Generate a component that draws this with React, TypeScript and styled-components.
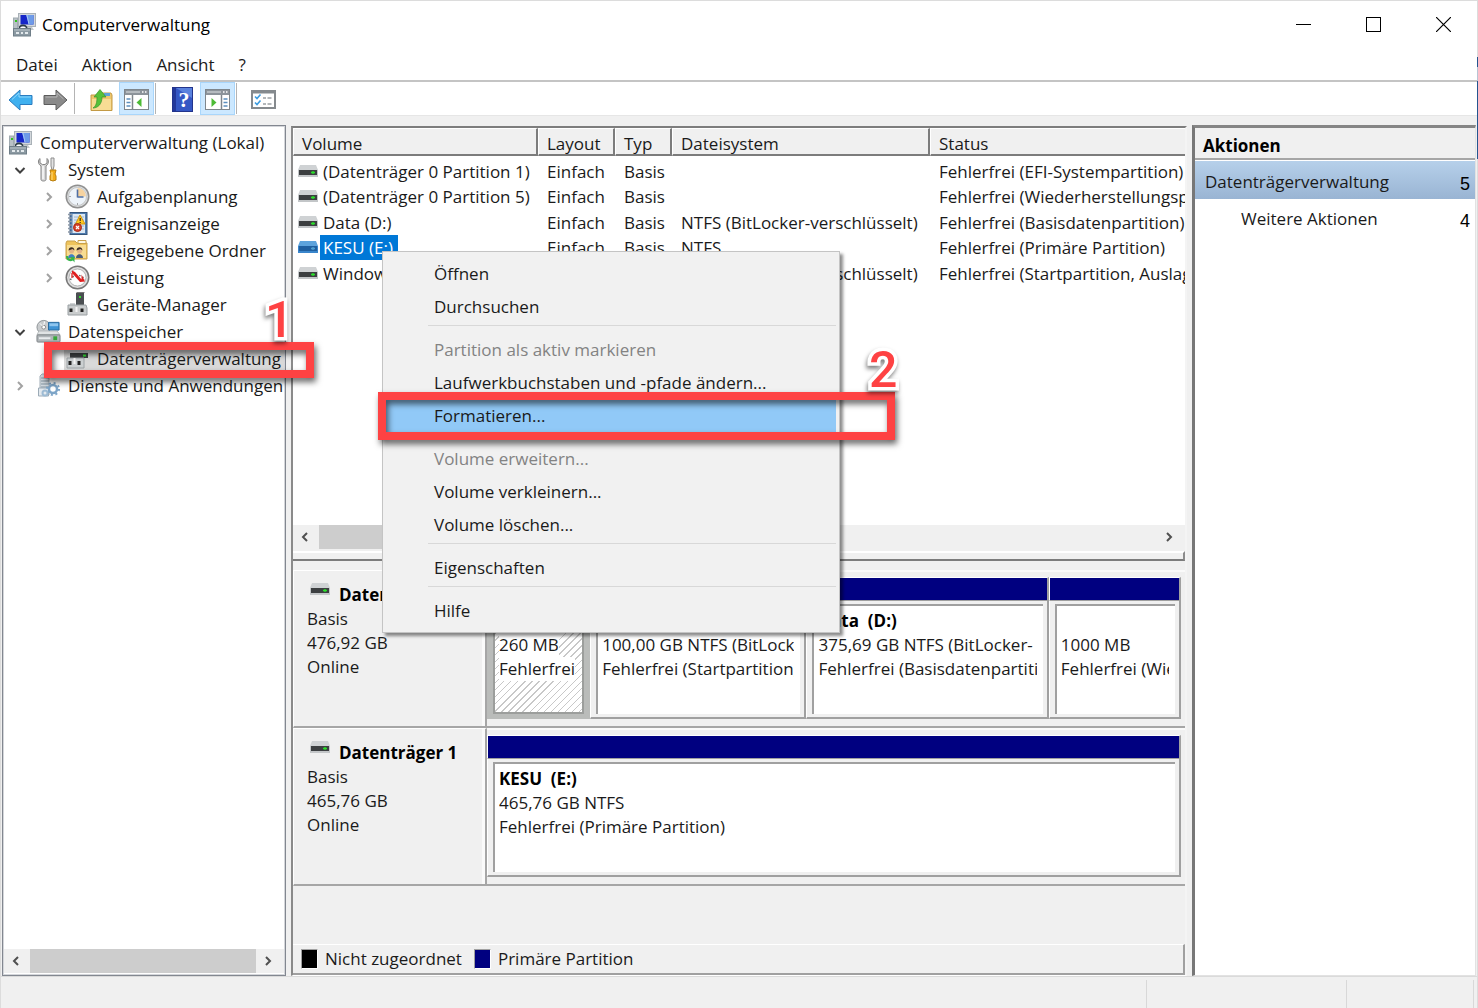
import React from "react";
import styled, { createGlobalStyle, css } from "styled-components";

const face = "#f0f0f0";
const ui = '"Open Sans", "Noto Sans", sans-serif';

const GlobalStyle = createGlobalStyle`
  *, *::before, *::after { box-sizing: border-box; }
  body { margin: 0; background: ${face}; color: #1a1a1a; font: 17px/24px ${ui}; }
  button { font: inherit; color: inherit; background: none; border: 0; padding: 0; margin: 0; text-align: left; }
  ul { list-style: none; margin: 0; padding: 0; }
  h1, h2, h3, p { margin: 0; font: inherit; }
  svg { display: block; flex: none; }
`;

/* ---------- window frame ---------- */

const Window = styled.div`
  position: relative;
  display: flex;
  flex-direction: column;
  min-height: 100vh;
  border-top: 1px solid #dcdcdc;
  border-left: 1px solid #dcdcdc;
  background: #fff;
  overflow: hidden;
`;

const TitleBar = styled.header`
  display: flex;
  align-items: center;
  height: 46px;
  padding-left: 11px;
`;

const Title = styled.h1`
  flex: 1;
  padding: 2px 0 0 5px;
  color: #000;
`;

const CaptionButton = styled.button`
  display: grid;
  place-items: center;
  width: 70px;
  height: 46px;
`;

const MenuBar = styled.nav`
  display: flex;
  height: 35px;
  padding-left: 3px;
  border-bottom: 2px solid #c4c4c4;
`;

const MenuBarItem = styled.button`
  padding: 2px 12px 0;
`;

const ToolBar = styled.div`
  display: flex;
  align-items: center;
  height: 33px;
  padding-left: 2px;
`;

const ToolButton = styled.button<{ $active?: boolean }>`
  display: grid;
  place-items: center;
  width: 35px;
  height: 33px;
  padding-top: 2px;
  ${(p) => p.$active && css`background: #cce8ff; border: 1px solid #a9d6fb;`}
`;

const ToolSeparator = styled.span`
  width: 2px;
  height: 31px;
  margin: 0 8px 0 1px;
  border-left: 1px solid #b4b4b4;
`;

const Body = styled.main`
  flex: 1;
  display: grid;
  grid-template-columns: 284px minmax(0, 1fr) 284px;
  gap: 5px;
  padding: 9px 2px 0 1px;
  background: ${face};
  border-top: 1px solid #e6e6e6;
`;

const StatusBar = styled.footer`
  display: flex;
  justify-content: flex-end;
  height: 32px;
  padding: 3px 4px 0 0;
  background: ${face};
  border-top: 1px solid #dadada;
`;

const StatusCell = styled.span<{ $width: number }>`
  width: ${(p) => p.$width}px;
  border-left: 1px solid #d8d8d8;
`;

/* ---------- scroll bar ---------- */

const ScrollTrack = styled.div`
  display: flex;
  height: 24px;
  padding-right: 2px;
  background: ${face};
`;

const ScrollArrow = styled.button`
  display: grid;
  place-items: center;
  width: 26px;
  height: 24px;
  padding-right: 2px;
`;

const ScrollThumb = styled.div<{ $grow: number }>`
  flex: ${(p) => p.$grow};
  background: #cdcdcd;
`;

const ScrollRest = styled.div<{ $grow: number }>`
  flex: ${(p) => p.$grow};
`;

/* ---------- console tree ---------- */

const TreePane = styled.section`
  display: flex;
  flex-direction: column;
  padding: 3px 1px 2px;
  background: #fff;
  border: 1px solid #828790;
  outline: 1px solid #d4d6da;
  outline-offset: -2px;
`;

const Tree = styled.ul`
  flex: 1;
`;

const TreeRow = styled.li<{ $level: number; $selected?: boolean }>`
  display: flex;
  align-items: center;
  height: 27px;
  padding-left: ${(p) => [4, 6, 35][p.$level]}px;
  ${(p) => p.$selected && css`
    background: linear-gradient(#d9d9d9, #d9d9d9) no-repeat 60px 0;
  `}
`;

const Toggle = styled.button`
  display: grid;
  place-items: center;
  width: 20px;
  height: 20px;
  margin-right: 6px;
`;

const TreeLabel = styled.button`
  display: flex;
  align-items: center;
  gap: 7px;
  white-space: nowrap;
`;

/* ---------- volume list ---------- */

const CenterPane = styled.section`
  display: flex;
  flex-direction: column;
  min-width: 0;
  margin-top: 1px;
  border: 1px solid #a0a0a0;
  border-width: 2px 2px 1px 2px;
  border-color: #7d7d7d #f4f4f4 #fff #8a8a8a;
`;

const VolumeList = styled.div`
  flex: 1;
  background: #fff;
  overflow: hidden;
`;

const VolumeTable = styled.table`
  width: 100%;
  table-layout: fixed;
  border-collapse: separate;
  border-spacing: 0;
`;

const Col = styled.col<{ $width?: number }>`
  ${(p) => p.$width && css`width: ${p.$width}px;`}
`;

const HeadCell = styled.th`
  height: 28px;
  padding: 4px 0 0 8px;
  line-height: 21px;
  font-weight: 400;
  text-align: left;
  background: ${face};
  border: 1px solid #fff;
  border-right: 2px solid #7c7c7c;
  border-bottom: 2px solid #7c7c7c;
  &:last-child { border-right: 0; }
`;

const VolumeRow = styled.tr`
  height: 26px;
  &:nth-child(even) { height: 25px; }
`;

const Cell = styled.td`
  padding: 0 0 0 9px;
  line-height: 25px;
  white-space: nowrap;
  overflow: hidden;
  &:first-child { padding-left: 5px; }
`;

const Spacer = styled.tbody`
  td { padding: 0; height: 2px; }
`;

const VolumeName = styled.div`
  display: flex;
  align-items: center;
  gap: 2px;
`;

const NameText = styled.span<{ $selected?: boolean }>`
  padding: 0 3px 0 3px;
  ${(p) => p.$selected && css`background: #0078d7; color: #fff; padding-right: 5px;`}
`;

const Splitter = styled.div`
  height: 10px;
  margin-top: 2px;
  border-top: 2px solid #fff;
  border-bottom: 2px solid #7c7c7c;
  border-right: 2px solid #8c8c8c;
`;

/* ---------- graphical disk view ---------- */

const DiskView = styled.div`
  padding: 9px 0 58px;
  background: ${face};
`;

const DiskRow = styled.div`
  display: grid;
  grid-template-columns: 194px minmax(0, 1fr);
  height: 158px;
`;

const DiskInfo = styled.div`
  padding: 12px 0 0 13px;
  border: 1px solid #fff;
  border-right: 2px solid #a6a6a6;
  border-bottom: 2px solid #a6a6a6;
  box-shadow: inset -3px 0 0 #fafafa;
`;

const DiskTitle = styled.h3`
  display: flex;
  gap: 9px;
  padding-left: 3px;
  color: #000;
  font-weight: 700;
`;

const Partitions = styled.div`
  display: flex;
  padding: 5px 4px 7px 0;
  border-top: 2px solid #fafafa;
  border-bottom: 2px solid #a6a6a6;
`;

const Partition = styled.div<{ $size: number }>`
  flex: ${(p) => p.$size} 1 0;
  min-width: 0;
  display: flex;
  flex-direction: column;
`;

const PartitionBar = styled.div`
  height: 24px;
  background: #000080;
  border: 1px solid #fff;
  border-right: 2px solid #a0a0a0;
  border-bottom: 1px solid #a0a0a0;
`;

const PartitionFrame = styled.div<{ $selected?: boolean }>`
  flex: 1;
  display: flex;
  padding: 3px 4px 3px 5px;
  border-right: 2px solid #a0a0a0;
  border-bottom: 2px solid #a0a0a0;
  border-left: 1px solid #fff;
  ${(p) => p.$selected && css`
    background: #babcba;
    border-color: #babcba;
  `}
`;

const PartitionBody = styled.div<{ $selected?: boolean }>`
  flex: 1;
  min-width: 0;
  padding: 3px 6px 0 4px;
  background: #fff;
  border-top: 2px solid #a0a0a0;
  border-left: 2px solid #a0a0a0;
  ${(p) => p.$selected && css`
    border: 2px solid #9c9e9c;
    background: repeating-linear-gradient(135deg, #fff 0 4px, #c8c8c8 4px 5px);
  `}
`;

const PartitionLine = styled.p<{ $bold?: boolean }>`
  height: 24px;
  overflow: hidden;
  white-space: pre;
  font-weight: ${(p) => (p.$bold ? 700 : 400)};
  color: ${(p) => (p.$bold ? "#000" : "inherit")};
`;

const LineText = styled.span`
  display: inline-block;
  background: #fff;
`;

const Legend = styled.div`
  display: flex;
  align-items: center;
  gap: 12px;
  height: 31px;
  padding-left: 8px;
  background: ${face};
  border-top: 1px solid #fff;
  border-right: 2px solid #a0a0a0;
  border-bottom: 2px solid #a0a0a0;
`;

const LegendItem = styled.span`
  display: flex;
  align-items: center;
  gap: 7px;
`;

const Swatch = styled.span<{ $color: string }>`
  width: 17px;
  height: 20px;
  background: ${(p) => p.$color};
  border: 1px solid #a0a0a0;
  border-right-color: #fff;
  border-bottom-color: #fff;
`;

/* ---------- actions pane ---------- */

const ActionsPane = styled.aside`
  border: 1px solid #e2e2e2;
  border-left: 3px solid #777;
  border-top: 3px solid #858585;
  background: #fff;
`;

const ActionsTitle = styled.h2`
  height: 32px;
  padding: 6px 0 0 8px;
  background: ${face};
  border-bottom: 2px solid #a6a6a6;
  color: #000;
  font-weight: 700;
`;

const ActionItem = styled.button<{ $group?: boolean }>`
  display: flex;
  justify-content: space-between;
  align-items: center;
  width: 100%;
  height: 36px;
  padding: 4px 5px 0 46px;
  ${(p) => p.$group && css`
    height: 38px;
    margin-top: 1px;
    padding-left: 10px;
    background: linear-gradient(#b6d0ea, #99b4d3);
  `}
`;

const Marker = styled.span`
  padding-top: 4px;
  font-family: "Liberation Sans", Arial, sans-serif;
  font-size: 18px;
  color: #000;
`;

/* ---------- context menu ---------- */

const ContextMenu = styled.div`
  position: absolute;
  left: 381px;
  top: 250px;
  width: 458px;
  padding: 6px 3px 4px 2px;
  background: #f1f1f1;
  border: 1px solid #c4c4c4;
  box-shadow: 3px 3px 3px rgba(0, 0, 0, 0.45);
`;

const ContextItem = styled.button<{ $highlight?: boolean }>`
  display: block;
  width: 100%;
  height: 33px;
  padding: 0 0 1px 49px;
  &:disabled { color: #838383; }
  ${(p) => p.$highlight && css`background: #91c9f7;`}
`;

const ContextRule = styled.hr`
  height: 10px;
  margin: 0 0 0 43px;
  border: 0;
  background: linear-gradient(#d8d8d8, #d8d8d8) no-repeat 0 1px / 100% 1px;
`;

/* ---------- callouts drawn over the window ---------- */

const Callout = styled.div<{ $x: number; $y: number; $w: number; $h: number }>`
  position: absolute;
  left: ${(p) => p.$x}px;
  top: ${(p) => p.$y}px;
  width: ${(p) => p.$w}px;
  height: ${(p) => p.$h}px;
  border: 8px solid #fe4243;
  filter: drop-shadow(2px 4px 3px rgba(0, 0, 0, 0.6));
  pointer-events: none;
`;

const CalloutNumber = styled.span<{ $x: number; $y: number }>`
  position: absolute;
  left: ${(p) => p.$x}px;
  top: ${(p) => p.$y}px;
  font: 500 50px/50px Roboto, "Liberation Sans", sans-serif;
  color: #fe4243;
  -webkit-text-stroke: 7px #fff;
  paint-order: stroke fill;
  filter: drop-shadow(-1px 3px 2px rgba(0, 0, 0, 0.5));
  pointer-events: none;
`;

/* ---------- icons ---------- */

const ComputerIcon = () => (
  <svg width="25" height="25" viewBox="0 0 25 25" aria-hidden="true">
    <rect x="6.500" y="1.500" width="17" height="13" fill="#d3d8dc" stroke="#a9b1b7" />
    <rect x="8.500" y="3" width="13" height="9.500" fill="#1626c8" />
    <path d="M14 3h7.500v9.500H17z" fill="#6d9be8" />
    <path d="M15 3l2 9.500" stroke="#a8c8f8" />
    <rect x="1.500" y="6" width="4" height="11" fill="#b9c1c6" stroke="#a0aab0" />
    <rect x="3" y="8" width="2" height="2" fill="#33c21d" />
    <path d="M15 15h5l2 3h-7z" fill="#c4cacd" />
    <path d="M7 17c1-5 7-5 8 0" fill="none" stroke="#2c3c48" strokeWidth="1.600" />
    <rect x="1.500" y="16.500" width="17" height="7.500" fill="#8b99a2" stroke="#6f7e88" />
    <path d="M2 18h16" stroke="#b9c3c8" />
    <path d="M4 21h3M9 21h2M13 21h3" stroke="#e3e9ec" strokeWidth="2" />
  </svg>
);

const ToolsIcon = () => (
  <svg width="25" height="25" viewBox="-1 0 25 25" aria-hidden="true">
    <path d="M3 1.500C.8 3 .8 7 4 9v13.500c0 2 5 2 5 0V9c3-2 3-6 1-7.500V6L8 7.500H5.500L3 6z" fill="#d6d6d6" stroke="#858585" />
    <path d="M6 9v13" stroke="#f8f8f8" strokeWidth="1.500" />
    <path d="M14 1h3v8l-1 4h-1l-1-4z" fill="#e2e2e2" stroke="#8d8d8d" />
    <path d="M13 13h6l-1 4 1 2v4q-3 2-6 0v-4l1-2z" fill="#f3ac18" stroke="#b87e10" />
    <path d="M15 15v8" stroke="#ffe08a" />
  </svg>
);

const ClockIcon = () => (
  <svg width="25" height="25" viewBox="0 0 25 25" aria-hidden="true">
    <circle cx="12.500" cy="12.500" r="12" fill="#8f8f8f" />
    <circle cx="12.500" cy="12.500" r="10.500" fill="#d9dbdc" />
    <circle cx="12.500" cy="12.500" r="9" fill="#eef4fa" stroke="#b4b4b4" strokeWidth=".6" />
    <path d="M12.500 12.500V4a8.500 8.500 0 018.500 8.500z" fill="#f6d3a0" />
    <path d="M12.500 5.500v8M12.500 13h6" stroke="#4f6fa4" strokeWidth="1.600" />
    <path d="M12.500 19.500v1M4.500 12.500h1" stroke="#555" />
  </svg>
);

const EventIcon = () => (
  <svg width="25" height="25" viewBox="0 0 25 25" aria-hidden="true">
    <rect x="5" y="1.500" width="17" height="22" fill="#4f7db0" stroke="#35557c" />
    <rect x="7.500" y="3" width="12.500" height="19" fill="#dbe7f3" />
    <path d="M9 6h10M9 9h10M9 12h10M9 15h10M9 18h10" stroke="#9db6d0" />
    <path d="M3 3.500h4M3 7h4M3 10.500h4M3 14h4M3 17.500h4M3 21h4" stroke="#8c98a6" strokeWidth="1.600" />
    <path d="M15 4l5 9H10.500z" fill="#ffc81e" stroke="#cf9410" />
    <path d="M15.200 7v3M15.200 11v1" stroke="#432" strokeWidth="1.300" />
    <circle cx="12.500" cy="16.500" r="4" fill="#d6432c" stroke="#a52a18" />
    <path d="M11 15l3 3M14 15l-3 3" stroke="#fff" strokeWidth="1.200" />
  </svg>
);

const SharedIcon = () => (
  <svg width="25" height="25" viewBox="0 0 25 25" aria-hidden="true">
    <path d="M1 5l1-2h8l2 2h10v16H1z" fill="#efc45c" stroke="#c9a04a" />
    <path d="M13 2.500h8v3h-8z" fill="#fdf6df" stroke="#c9a04a" />
    <path d="M2 7h19v13H2z" fill="#f8dc92" />
    <circle cx="6.500" cy="13" r="2.500" fill="#e2b488" />
    <path d="M3.500 12.500c0-4.500 6-4.500 6 0l-2-1.500z" fill="#3c2d23" />
    <path d="M3 20c0-5 7-5 7 0z" fill="#3f80c4" />
    <circle cx="14.500" cy="13" r="2.500" fill="#e2b488" />
    <path d="M11.500 12.500c0-4.500 6-4.500 6 0l-2-1.500z" fill="#3c2d23" />
    <path d="M11 20c0-5 7-5 7 0z" fill="#4a5b78" />
    <path d="M1 18c0 5 4 6 7 4.500l1.500 2v-5.500H5l1.500 1.500C4 21.500 3 20 3 18z" fill="#35b44a" />
  </svg>
);

const PerfIcon = () => (
  <svg width="25" height="25" viewBox="0 0 25 25" aria-hidden="true">
    <circle cx="12.500" cy="12.500" r="12" fill="#777" />
    <circle cx="12.500" cy="12.500" r="10.500" fill="#dedede" />
    <circle cx="12.500" cy="12.500" r="8.500" fill="#fdfdfd" stroke="#9b9b9b" strokeWidth=".7" />
    <path d="M5.500 15a7.500 7.500 0 0114 0" fill="none" stroke="#666" strokeWidth="1.500" strokeDasharray="1.500 2" />
    <path d="M7 5.500l3 1.500 6.500 7.500V9.500l3.500 7-5 .5L7 8z" fill="#df1f1f" />
    <path d="M7 8v5" stroke="#df1f1f" strokeWidth="1.300" />
  </svg>
);

const DeviceIcon = () => (
  <svg width="25" height="25" viewBox="0 0 25 25" aria-hidden="true">
    <path d="M11 1h8v13h-8z" fill="#4a4e51" />
    <path d="M11 1l1-1h8l-1 1z" fill="#777" />
    <rect x="14" y="4" width="2" height="2" fill="#37dd37" />
    <path d="M5 11h5v3H5z" fill="#d0d3d5" />
    <path d="M3 13h18l1 3v7H3z" fill="#c9cccd" stroke="#9aa0a3" />
    <path d="M6 16.500v3.500M17 16.500v3.500" stroke="#222" strokeWidth="3" />
    <path d="M11.500 15v5" stroke="#f4f4f4" strokeWidth="2" />
  </svg>
);

const StorageIcon = () => (
  <svg width="25" height="25" viewBox="0 0 26 25" aria-hidden="true">
    <circle cx="8" cy="8" r="7" fill="#c9ccce" stroke="#8d9396" />
    <circle cx="8" cy="8" r="2" fill="#fff" stroke="#888" />
    <path d="M4 4l3 3M9 2l-1 4" stroke="#fff" />
    <path d="M13 3h11v8H13z" fill="#3f93d4" stroke="#27689c" />
    <path d="M14 4h9v3h-9z" fill="#8ec5ee" />
    <path d="M3 12h19l3 4H1z" fill="#e0e3e4" stroke="#a6abad" strokeWidth=".7" />
    <rect x="1" y="16" width="24" height="7.500" rx="1" fill="#b0b5b8" stroke="#7d8386" />
    <path d="M3 19.500h12" stroke="#e9ecee" strokeWidth="2" />
    <rect x="18" y="17.500" width="4" height="4" fill="#38a83a" />
  </svg>
);

const DiskMgmtIcon = () => (
  <svg width="25" height="25" viewBox="0 0 25 25" aria-hidden="true">
    <path d="M5 4h15l4 3H2z" fill="#d2d5d7" />
    <path d="M5 7h18v5H5z" fill="#3b3f41" />
    <rect x="18" y="8.500" width="3" height="2" fill="#31e031" />
    <path d="M2 12h17v10H2z" fill="#ccd0d2" stroke="#9ea4a7" />
    <path d="M5 15v4M14 15v4" stroke="#222" strokeWidth="3" />
    <path d="M9.500 12v6" stroke="#f5f5f5" strokeWidth="2" />
  </svg>
);

const ServicesIcon = () => (
  <svg width="25" height="25" viewBox="-1 0 25 25" aria-hidden="true">
    <path d="M3 3l2-2h7v21H3z" fill="#d3dae0" stroke="#a3afb8" />
    <path d="M4 5h8M4 8h8M4 11h8M4 14h8" stroke="#8496a3" />
    <path d="M1.500 15h10v8h-10z" fill="#e3e9ee" stroke="#9cabb7" />
    <circle cx="16" cy="16" r="4" fill="#fff" stroke="#7da5c8" strokeWidth="2.500" />
    <circle cx="16" cy="16" r="6" fill="none" stroke="#7da5c8" strokeWidth="2" strokeDasharray="2 2.700" />
    <circle cx="8" cy="20" r="2.500" fill="none" stroke="#9dbbd4" strokeWidth="2" />
  </svg>
);

const DriveIcon = ({ selected = false }: { selected?: boolean }) => (
  <svg width="20" height="13" viewBox="0 0 20 13" aria-hidden="true">
    <path d="M2 0h16l2 5H0z" fill={selected ? "#5da3dc" : "#cfd2d4"} />
    <path d="M0 5h20v7H0z" fill={selected ? "#3a86cc" : "#c3c6c8"} />
    <path d="M1 5h18v5H1z" fill={selected ? "#1f5f9f" : "#3c3f41"} />
    <path d="M13 7.500h4M15 6v3" stroke={selected ? "#4f9fd0" : "#2ade2a"} strokeWidth="1.300" />
  </svg>
);

const ArrowIcon = ({ back = false }: { back?: boolean }) => (
  <svg width="25" height="22" viewBox="0 0 25 22" aria-hidden="true">
    <path
      d={back ? "M1 11L12 1v5.500h12v9H12V21z" : "M24 11L13 1v5.500H1v9h12V21z"}
      fill={back ? "#3fb0ef" : "#8a8a8a"}
      stroke={back ? "#2a7cc0" : "#5c5c5c"}
    />
    <path d={back ? "M4 10.500L11 4v4h12" : "M2.500 8H14V4l6.500 6"} fill="none" stroke={back ? "#8fd6fb" : "#b5b5b5"} />
  </svg>
);

const FolderUpIcon = () => (
  <svg width="23" height="24" viewBox="0 0 23 24" aria-hidden="true">
    <path d="M1 7h9l2-2h9l1 2v15.500H1z" fill="#eec66c" stroke="#c39a45" />
    <path d="M2 11h19v11H2z" fill="#f8dc94" />
    <path d="M14 5h6v3h-6z" fill="#5fa3d8" />
    <path d="M3 20c3-2 4-5 4-11H4l6-7.500L16 9h-4c0 7-4 11-9 11z" fill="#56c13a" stroke="#37922a" strokeWidth=".7" />
  </svg>
);

const PaneIcon = ({ right = false }: { right?: boolean }) => (
  <svg width="25" height="21" viewBox="0 0 25 21" aria-hidden="true">
    <rect x=".5" y=".5" width="24" height="20" fill="#fff" stroke="#7f868c" />
    <path d="M1 1h23v5H1z" fill="#8c939a" />
    <path d="M2 3h14" stroke="#dfe3e6" />
    <path d="M18 3h1.500M21 3h1.500" stroke="#fff" strokeWidth="1.500" />
    <path d={right ? "M16.500 6v15" : "M8.500 6v15"} stroke="#7f868c" strokeWidth="1.500" />
    <path d={right ? "M18.500 10h4M18.500 13.500h4M18.500 17h4" : "M2.500 10h4M2.500 13.500h4M2.500 17h4"} stroke="#5c8fbf" strokeWidth="1.500" />
    <path d={right ? "M6.500 9v9l5-4.500z" : "M17.500 9v9l-5-4.500z"} fill="#4dbb36" />
  </svg>
);

const HelpIcon = () => (
  <svg width="21" height="25" viewBox="0 0 21 25" aria-hidden="true">
    <rect x=".5" y=".5" width="20" height="24" fill="#3457c4" stroke="#22348c" />
    <path d="M1 1h3v23H1z" fill="#23389a" />
    <path d="M4 1h16v10z" fill="#5a82de" />
    <text x="12" y="20" textAnchor="middle" fontFamily="Liberation Serif, serif" fontWeight="700" fontSize="22" fill="#fff">?</text>
  </svg>
);

const ChecklistIcon = () => (
  <svg width="25" height="19" viewBox="0 0 25 19" aria-hidden="true">
    <rect x="1" y="1" width="23" height="17" fill="#fff" stroke="#858a8e" strokeWidth="2" />
    <path d="M1 2h23" stroke="#858a8e" strokeWidth="3" />
    <path d="M4 6.500l2 2 3.500-4M4 12.500l2 2 3.500-4" fill="none" stroke="#3a9be0" strokeWidth="1.600" />
    <path d="M12 8h3M16.500 8h4M12 14h3M16.500 14h4" stroke="#9aa0a4" strokeWidth="1.500" />
  </svg>
);

const Chevron = ({ dir, color = "#505050" }: { dir: "left" | "right" | "down"; color?: string }) => (
  <svg width="12" height="12" viewBox="0 0 12 12" aria-hidden="true">
    <path
      d={dir === "left" ? "M8 2L4 6l4 4" : dir === "right" ? "M4 2l4 4-4 4" : "M1.500 4L6 8.500 10.500 4"}
      fill="none"
      stroke={color}
      strokeWidth="2"
    />
  </svg>
);

/* Slivers of the desktop that show at the window's left and right edges. */
const EdgeLeft = styled.span`
  position: absolute;
  left: -1px;
  top: 0;
  width: 1px;
  height: 100%;
  background: linear-gradient(
    transparent 344px, #d8343c 344px 353px, #2fb457 353px 382px, transparent 382px,
    transparent 386px, #2d6fc0 386px 393px, transparent 393px,
    transparent 512px, #2d8ae0 512px 518px, transparent 518px,
    transparent 544px, #2d6fc0 544px 552px, transparent 552px,
    transparent 690px, #111 690px 706px, transparent 706px,
    transparent 734px, #e08a2a 734px 749px, transparent 749px,
    transparent 828px, #2fb457 828px 872px, transparent 872px,
    transparent 902px, #111 902px 904px, transparent 904px 908px, #111 908px 910px, transparent 910px
  );
`;

const EdgeRight = styled.span`
  position: absolute;
  right: 0;
  top: 0;
  width: 1px;
  height: 100%;
  background: linear-gradient(#dcdcdc 56px, #24558f 56px 66px, #b8c4d4 66px 80px, #24558f 80px 158px, #dcdcdc 158px);
`;

/* ---------- data ---------- */

type TreeNode = { label: string; level: number; icon: React.ReactNode; open?: boolean; selected?: boolean };

const tree: TreeNode[] = [
  { label: "Computerverwaltung (Lokal)", level: 0, icon: <ComputerIcon /> },
  { label: "System", level: 1, icon: <ToolsIcon />, open: true },
  { label: "Aufgabenplanung", level: 2, icon: <ClockIcon />, open: false },
  { label: "Ereignisanzeige", level: 2, icon: <EventIcon />, open: false },
  { label: "Freigegebene Ordner", level: 2, icon: <SharedIcon />, open: false },
  { label: "Leistung", level: 2, icon: <PerfIcon />, open: false },
  { label: "Geräte-Manager", level: 2, icon: <DeviceIcon /> },
  { label: "Datenspeicher", level: 1, icon: <StorageIcon />, open: true },
  { label: "Datenträgerverwaltung", level: 2, icon: <DiskMgmtIcon />, selected: true },
  { label: "Dienste und Anwendungen", level: 1, icon: <ServicesIcon />, open: false },
];

const volumes = [
  { name: "(Datenträger 0 Partition 1)", fs: "", status: "Fehlerfrei (EFI-Systempartition)" },
  { name: "(Datenträger 0 Partition 5)", fs: "", status: "Fehlerfrei (Wiederherstellungspartition)" },
  { name: "Data (D:)", fs: "NTFS (BitLocker-verschlüsselt)", status: "Fehlerfrei (Basisdatenpartition)" },
  { name: "KESU (E:)", fs: "NTFS", status: "Fehlerfrei (Primäre Partition)", selected: true },
  { name: "Windows (C:)", fs: "NTFS (BitLocker-verschlüsselt)", status: "Fehlerfrei (Startpartition, Auslagerungsdatei)" },
];

const disks = [
  {
    title: "Datenträger 0",
    size: "476,92 GB",
    parts: [
      { size: 103, name: "", info: "260 MB", status: "Fehlerfrei", selected: true },
      { size: 216, name: "Windows  (C:)", info: "100,00 GB NTFS (BitLocker-verschlüsselt)", status: "Fehlerfrei (Startpartition, Auslagerungsdatei)" },
      { size: 242, name: "Data  (D:)", info: "375,69 GB NTFS (BitLocker-", status: "Fehlerfrei (Basisdatenpartition)" },
      { size: 132, name: "", info: "1000 MB", status: "Fehlerfrei (Wiederherstellungspartition)" },
    ],
  },
  {
    title: "Datenträger 1",
    size: "465,76 GB",
    parts: [{ size: 693, name: "KESU  (E:)", info: "465,76 GB NTFS", status: "Fehlerfrei (Primäre Partition)" }],
  },
];

const contextItems: ({ label: string; disabled?: boolean; highlight?: boolean } | null)[] = [
  { label: "Öffnen" },
  { label: "Durchsuchen" },
  null,
  { label: "Partition als aktiv markieren", disabled: true },
  { label: "Laufwerkbuchstaben und -pfade ändern..." },
  { label: "Formatieren...", highlight: true },
  null,
  { label: "Volume erweitern...", disabled: true },
  { label: "Volume verkleinern..." },
  { label: "Volume löschen..." },
  null,
  { label: "Eigenschaften" },
  null,
  { label: "Hilfe" },
];

export default function App() {
  return (
    <>
      <GlobalStyle />
      <Window>
        <TitleBar>
          <ComputerIcon />
          <Title>Computerverwaltung</Title>
          <CaptionButton aria-label="Minimieren">
            <svg width="15" height="15"><path d="M0 7.500h15" stroke="#000" /></svg>
          </CaptionButton>
          <CaptionButton aria-label="Maximieren">
            <svg width="15" height="15"><rect x=".5" y=".5" width="14" height="14" fill="none" stroke="#000" /></svg>
          </CaptionButton>
          <CaptionButton aria-label="Schließen">
            <svg width="15" height="15"><path d="M0 0l15 15M15 0L0 15" stroke="#000" strokeWidth="1.200" /></svg>
          </CaptionButton>
        </TitleBar>

        <MenuBar>
          {["Datei", "Aktion", "Ansicht", "?"].map((m) => (
            <MenuBarItem key={m}>{m}</MenuBarItem>
          ))}
        </MenuBar>

        <ToolBar>
          <ToolButton aria-label="Zurück"><ArrowIcon back /></ToolButton>
          <ToolButton aria-label="Vorwärts"><ArrowIcon /></ToolButton>
          <ToolSeparator />
          <ToolButton aria-label="Übergeordneter Ordner"><FolderUpIcon /></ToolButton>
          <ToolButton $active aria-label="Konsolenstruktur"><PaneIcon /></ToolButton>
          <ToolSeparator />
          <ToolButton aria-label="Hilfe"><HelpIcon /></ToolButton>
          <ToolButton $active aria-label="Aktionsbereich"><PaneIcon right /></ToolButton>
          <ToolSeparator />
          <ToolButton aria-label="Einstellungen"><ChecklistIcon /></ToolButton>
        </ToolBar>

        <Body>
          <TreePane>
            <Tree>
              {tree.map((n) => (
                <TreeRow key={n.label} $level={n.level} $selected={n.selected}>
                  {n.level > 0 && (
                    <Toggle aria-label={n.label}>
                      {n.open !== undefined && (
                        <Chevron dir={n.open ? "down" : "right"} color={n.open ? "#404040" : "#a2a2a2"} />
                      )}
                    </Toggle>
                  )}
                  <TreeLabel>{n.icon}{n.label}</TreeLabel>
                </TreeRow>
              ))}
            </Tree>
            <ScrollTrack>
              <ScrollArrow aria-label="Nach links"><Chevron dir="left" /></ScrollArrow>
              <ScrollThumb $grow={1} />
              <ScrollArrow aria-label="Nach rechts"><Chevron dir="right" /></ScrollArrow>
            </ScrollTrack>
          </TreePane>

          <CenterPane>
            <VolumeList>
              <VolumeTable>
                <colgroup>
                  <Col $width={245} />
                  <Col $width={77} />
                  <Col $width={57} />
                  <Col $width={258} />
                  <Col />
                </colgroup>
                <thead>
                  <tr>
                    {["Volume", "Layout", "Typ", "Dateisystem", "Status"].map((h) => (
                      <HeadCell key={h} scope="col">{h}</HeadCell>
                    ))}
                  </tr>
                </thead>
                <Spacer><tr><td colSpan={5} /></tr></Spacer>
                <tbody>
                  {volumes.map((v) => (
                    <VolumeRow key={v.name}>
                      <Cell>
                        <VolumeName>
                          <DriveIcon selected={v.selected} />
                          <NameText $selected={v.selected}>{v.name}</NameText>
                        </VolumeName>
                      </Cell>
                      <Cell>Einfach</Cell>
                      <Cell>Basis</Cell>
                      <Cell>{v.fs}</Cell>
                      <Cell>{v.status}</Cell>
                    </VolumeRow>
                  ))}
                </tbody>
              </VolumeTable>
            </VolumeList>
            <ScrollTrack>
              <ScrollArrow aria-label="Nach links"><Chevron dir="left" /></ScrollArrow>
              <ScrollThumb $grow={3} />
              <ScrollRest $grow={2} />
              <ScrollArrow aria-label="Nach rechts"><Chevron dir="right" /></ScrollArrow>
            </ScrollTrack>
            <Splitter />
            <DiskView>
              {disks.map((d) => (
                <DiskRow key={d.title}>
                  <DiskInfo>
                    <DiskTitle><DriveIcon />{d.title}</DiskTitle>
                    <p>Basis</p>
                    <p>{d.size}</p>
                    <p>Online</p>
                  </DiskInfo>
                  <Partitions>
                    {d.parts.map((p) => (
                      <Partition key={p.info} $size={p.size}>
                        <PartitionBar />
                        <PartitionFrame $selected={p.selected}>
                          <PartitionBody $selected={p.selected}>
                            <PartitionLine $bold>{p.name}</PartitionLine>
                            <PartitionLine><LineText>{p.info}</LineText></PartitionLine>
                            <PartitionLine><LineText>{p.status}</LineText></PartitionLine>
                          </PartitionBody>
                        </PartitionFrame>
                      </Partition>
                    ))}
                  </Partitions>
                </DiskRow>
              ))}
            </DiskView>
            <Legend>
              <LegendItem><Swatch $color="#000" />Nicht zugeordnet</LegendItem>
              <LegendItem><Swatch $color="#000080" />Primäre Partition</LegendItem>
            </Legend>
          </CenterPane>

          <ActionsPane>
            <ActionsTitle>Aktionen</ActionsTitle>
            <ActionItem $group>Datenträgerverwaltung<Marker>5</Marker></ActionItem>
            <ActionItem>Weitere Aktionen<Marker>4</Marker></ActionItem>
          </ActionsPane>
        </Body>

        <StatusBar>
          <StatusCell $width={200} />
          <StatusCell $width={127} />
          <StatusCell $width={1} />
        </StatusBar>

        <ContextMenu>
          {contextItems.map((it, i) =>
            it ? (
              <ContextItem key={it.label} disabled={it.disabled} $highlight={it.highlight}>{it.label}</ContextItem>
            ) : (
              <ContextRule key={i} />
            )
          )}
        </ContextMenu>

        <Callout $x={43} $y={341} $w={270} $h={36} />
        <CalloutNumber $x={264} $y={294}>1</CalloutNumber>
        <Callout $x={377} $y={391} $w={517} $h={48} />
        <CalloutNumber $x={868} $y={344}>2</CalloutNumber>
        <EdgeLeft />
        <EdgeRight />
      </Window>
    </>
  );
}
